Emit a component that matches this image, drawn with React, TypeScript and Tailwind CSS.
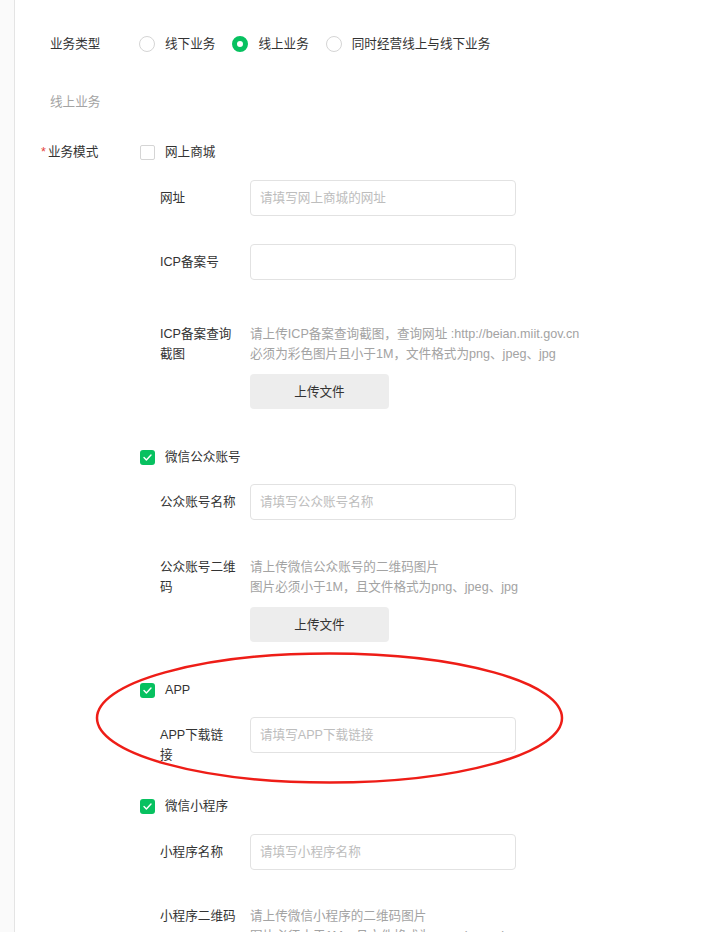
import type { ReactNode } from "react";

const font = { fontFamily: '"Liberation Sans", "Noto Sans CJK SC", sans-serif' };

function Radio({ checked, label }: { checked?: boolean; label: string }) {
  return (
    <label className="flex items-center">
      {checked ? (
        <span className="w-4 h-4 rounded-full border-[5px] border-[#07c160] bg-white box-border" />
      ) : (
        <span className="w-4 h-4 rounded-full border border-[#d5d5d5] bg-white box-border" />
      )}
      <span className="ml-[10px] text-[#333]">{label}</span>
    </label>
  );
}

function Check({ checked, label }: { checked?: boolean; label: string }) {
  return (
    <div className="flex items-center h-5">
      {checked ? (
        <span className="w-[15px] h-[15px] rounded-[3px] bg-[#07c160] flex items-center justify-center ml-px">
          <svg width="9" height="7" viewBox="0 0 9 7" fill="none">
            <path d="M1 3.5L3.4 6L8 1" stroke="white" strokeWidth="1.4" strokeLinecap="round" strokeLinejoin="round" />
          </svg>
        </span>
      ) : (
        <span className="w-[15px] h-[15px] rounded-[2px] border border-[#d5d5d5] bg-white box-border ml-px" />
      )}
      <span className="ml-[10px] text-[#333]">{label}</span>
    </div>
  );
}

function Item({
  label,
  top,
  children,
  className = "",
  labelWidth = "w-[80px] mr-[10px]",
}: {
  label: string;
  top?: boolean;
  children: ReactNode;
  className?: string;
  labelWidth?: string;
}) {
  return (
    <div className={`flex items-start pl-[21px] ${className}`}>
      <div className={`${labelWidth} text-[#333] leading-5 ${top ? "" : "pt-2"}`}>{label}</div>
      {children}
    </div>
  );
}

function Input({ placeholder }: { placeholder?: string }) {
  return (
    <input
      placeholder={placeholder}
      className="w-[266px] h-9 rounded border border-[#e2e2e2] px-[9px] text-[12.6px] text-[#333] placeholder:text-[#bdbdbd] outline-none bg-white"
      style={font}
    />
  );
}

function Upload({ lines }: { lines: string[] }) {
  return (
    <div className="flex flex-col">
      {lines.map((l) => (
        <div key={l} className="leading-5 text-[#a3a3a3] whitespace-nowrap">{l}</div>
      ))}
      <button className="mt-[10px] w-[139px] h-[35px] rounded bg-[#ededed] text-[#333] text-[12.6px]" style={font}>
        上传文件
      </button>
    </div>
  );
}

export default function App() {
  return (
    <div className="relative min-h-screen bg-[#fafafa] text-[12.6px]" style={font}>
      <div className="ml-[14px] min-h-screen border-l border-[#e4e4e4] bg-white pt-[34px] pl-[35px] pb-10">
        <div className="flex items-center leading-5">
          <div className="w-[89px] text-[#333]">业务类型</div>
          <div className="flex items-center gap-[17px]">
            <Radio label="线下业务" />
            <Radio checked label="线上业务" />
            <Radio label="同时经营线上与线下业务" />
          </div>
        </div>

        <div className="mt-[38px] leading-5 text-[#a3a3a3]">线上业务</div>

        <div className="mt-[30px] flex items-start leading-5">
          <div className="w-[89px] text-[#333]">
            <span className="-ml-[9px] mr-[2px] text-[#e64340]">*</span>业务模式
          </div>
          <div className="flex flex-col">
            <Check label="网上商城" />
            <Item label="网址" className="mt-[18px]">
              <Input placeholder="请填写网上商城的网址" />
            </Item>
            <Item label="ICP备案号" className="mt-[28px]">
              <Input />
            </Item>
            <Item label="ICP备案查询截图" top className="mt-[44px]">
              <Upload
                lines={[
                  "请上传ICP备案查询截图，查询网址 :http://beian.miit.gov.cn",
                  "必须为彩色图片且小于1M，文件格式为png、jpeg、jpg",
                ]}
              />
            </Item>

            <div className="mt-[38px]">
              <Check checked label="微信公众账号" />
            </div>
            <Item label="公众账号名称" className="mt-[17px]">
              <Input placeholder="请填写公众账号名称" />
            </Item>
            <Item label="公众账号二维码" top className="mt-[37px]">
              <Upload lines={["请上传微信公众账号的二维码图片", "图片必须小于1M，且文件格式为png、jpeg、jpg"]} />
            </Item>

            <div className="mt-[38px]">
              <Check checked label="APP" />
            </div>
            <Item label="APP下载链接" className="mt-[17px]" labelWidth="w-[74px] mr-[16px]">
              <Input placeholder="请填写APP下载链接" />
            </Item>

            <div className="mt-[31px]">
              <Check checked label="微信小程序" />
            </div>
            <Item label="小程序名称" className="mt-[18px]">
              <Input placeholder="请填写小程序名称" />
            </Item>
            <Item label="小程序二维码" top className="mt-[36px]">
              <Upload lines={["请上传微信小程序的二维码图片", "图片必须小于1M，且文件格式为png、jpeg、jpg"]} />
            </Item>
          </div>
        </div>
      </div>

      <svg className="absolute left-0 top-0 pointer-events-none" width="710" height="932" viewBox="0 0 710 932" fill="none">
        <ellipse cx="329.5" cy="718" rx="232.5" ry="64.5" stroke="#ee1d17" strokeWidth="2.5" />
      </svg>
    </div>
  );
}
